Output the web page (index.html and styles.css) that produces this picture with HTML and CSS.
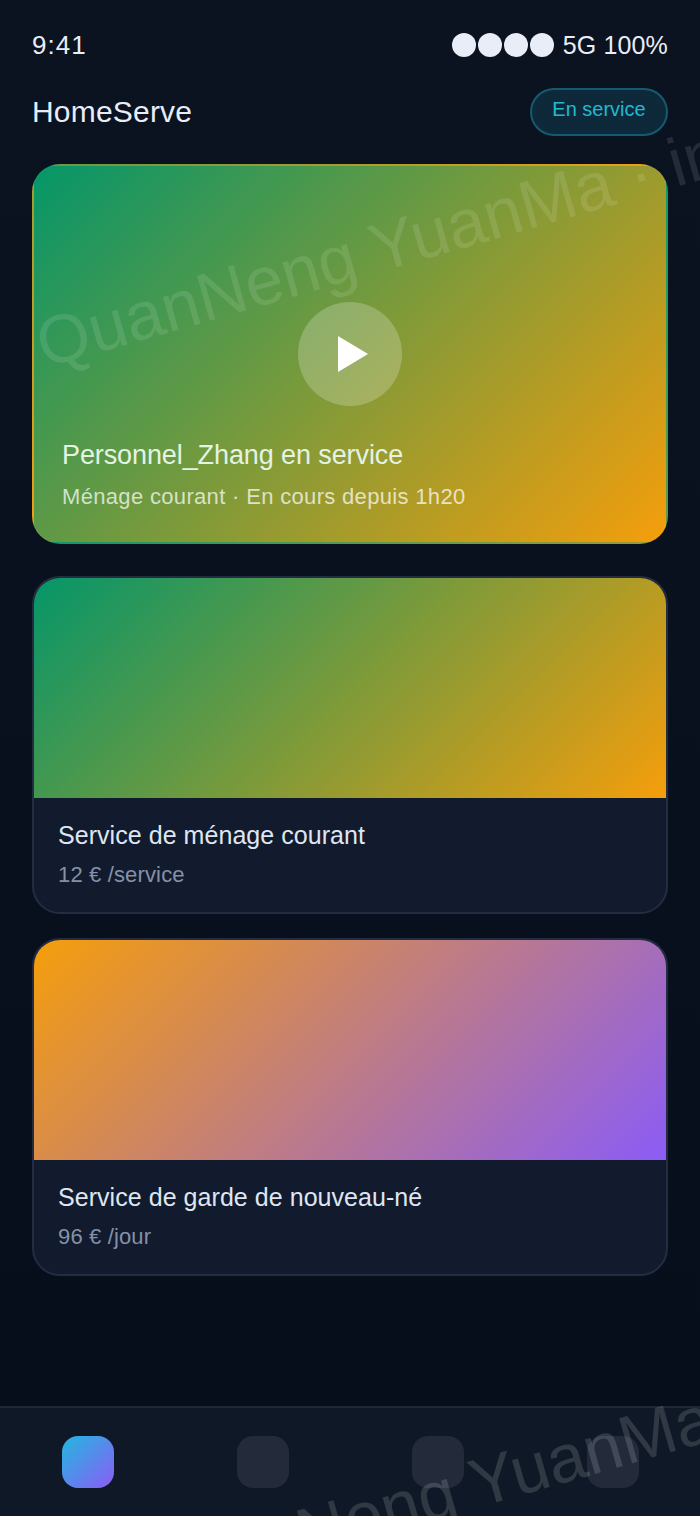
FILE: index.html
```html
<!DOCTYPE html>
<html lang="fr">
<head>
<meta charset="utf-8">
<title>HomeServe</title>
<link rel="stylesheet" href="styles.css">
</head>
<body>
<div class="app">
  <div class="status">
    <span class="time">9:41</span>
    <div class="status-right">
      <span class="dots"><i></i><i></i><i></i><i></i></span>
      <span class="net">5G 100%</span>
    </div>
  </div>
  <header class="head">
    <h1>HomeServe</h1>
    <span class="badge">En service</span>
  </header>
  <main class="main">
    <section class="hero">
      <div class="play">
        <svg width="30" height="36" viewBox="0 0 30 36"><polygon points="0,0 30,18 0,36" fill="#fff"/></svg>
      </div>
      <div class="hero-text">
        <div class="hero-title">Personnel_Zhang en service</div>
        <div class="hero-sub">Ménage courant · En cours depuis 1h20</div>
      </div>
    </section>
    <div class="list">
      <article class="card">
        <div class="thumb thumb-green"></div>
        <div class="info">
          <div class="name">Service de ménage courant</div>
          <div class="price">12 € /service</div>
        </div>
      </article>
      <article class="card">
        <div class="thumb thumb-violet"></div>
        <div class="info">
          <div class="name">Service de garde de nouveau-né</div>
          <div class="price">96 € /jour</div>
        </div>
      </article>
    </div>
  </main>
  <nav class="nav">
    <span class="tab tab-on"></span>
    <span class="tab"></span>
    <span class="tab"></span>
    <span class="tab"></span>
  </nav>
  <div class="mark mark-a">QuanNeng YuanMa · internal</div>
  <div class="mark mark-b">QuanNeng YuanMa · internal</div>
</div>
</body>
</html>
```
FILE: styles.css
```css
* { box-sizing: border-box; }
html, body { margin: 0; padding: 0; }
body { background: #0a111e; font-family: "Liberation Sans", Arial, sans-serif; }
.app {
  position: relative;
  width: 700px;
  height: 1516px;
  overflow: hidden;
  display: flex;
  flex-direction: column;
  background: linear-gradient(180deg, #0b1220, #070e1b);
  color: #e8edf7;
}
.status {
  height: 88px;
  padding: 26px 32px 0;
  display: flex;
  justify-content: space-between;
  align-items: flex-start;
  font-size: 25px;
  line-height: 38px;
}
.time { font-size: 26px; letter-spacing: 1px; }
.net { letter-spacing: .15px; }
.status-right { display: flex; align-items: center; gap: 9px; }
.dots { display: flex; gap: 2px; }
.dots i { display: block; width: 24px; height: 24px; border-radius: 50%; background: #e8edf7; }
.head {
  height: 76px;
  padding: 0 32px 28px;
  display: flex;
  justify-content: space-between;
  align-items: center;
}
.head h1 { margin: 0; font-size: 30px; letter-spacing: .2px; font-weight: 400; color: #e8edf7; }
.badge {
  width: 138px;
  height: 48px;
  border-radius: 24px;
  border: 2px solid rgba(34, 184, 207, .35);
  background: rgba(34, 184, 207, .15);
  color: #22b8cf;
  font-size: 20px;
  line-height: 38px;
  text-align: center;
}
.main { flex: 1; padding: 0 32px; }
.hero {
  position: relative;
  height: 380px;
  border: 2px solid rgba(255, 255, 255, .02);
  border-radius: 28px;
  background: linear-gradient(135deg, #059669, #f59e0b);
  display: flex;
  flex-direction: column;
  justify-content: flex-end;
  padding: 0 28px 28px;
  margin-bottom: 32px;
}
.play {
  position: absolute;
  left: 264px;
  top: 136px;
  width: 104px;
  height: 104px;
  border-radius: 50%;
  background: rgba(255, 255, 255, .22);
  display: flex;
  align-items: center;
  justify-content: center;
  padding-left: 6px;
}
.hero-title { font-size: 27px; letter-spacing: -.1px; line-height: 38px; color: #e3f3e4; }
.hero-sub { font-size: 22px; letter-spacing: .33px; line-height: 34px; margin-top: 6px; color: rgba(255, 255, 255, .72); }
.list { display: flex; flex-direction: column; gap: 24px; }
.card {
  height: 338px;
  border: 2px solid #232c40;
  border-radius: 28px;
  overflow: hidden;
  background: #121b2d;
}
.thumb { height: 220px; }
.thumb-green { background: linear-gradient(135deg, #059669, #f59e0b); }
.thumb-violet { background: linear-gradient(135deg, #f59e0b, #8b5cf6); }
.info { padding: 19px 24px; }
.name { font-size: 25px; letter-spacing: .05px; line-height: 36px; color: #dfe6f2; }
.price { font-size: 22px; letter-spacing: .15px; line-height: 30px; margin-top: 7px; color: #8491a8; }
.nav {
  height: 110px;
  border-top: 2px solid #1e2737;
  background: #0f1826;
  display: flex;
  justify-content: space-around;
  align-items: flex-start;
  padding-top: 28px;
}
.tab { width: 52px; height: 52px; border-radius: 16px; background: #232b3b; }
.tab-on { background: linear-gradient(135deg, #22b8e0, #8b5cf6); }
.mark {
  position: absolute;
  white-space: nowrap;
  font-size: 68px;
  line-height: 80px;
  color: rgba(255, 255, 255, .11);
  transform: rotate(-16deg);
  transform-origin: 0 50%;
  pointer-events: none;
}
.mark-a { left: 38px; top: 305px; }
.mark-b { left: 138px; top: 1540px; color: rgba(255, 255, 255, .14); }
```
